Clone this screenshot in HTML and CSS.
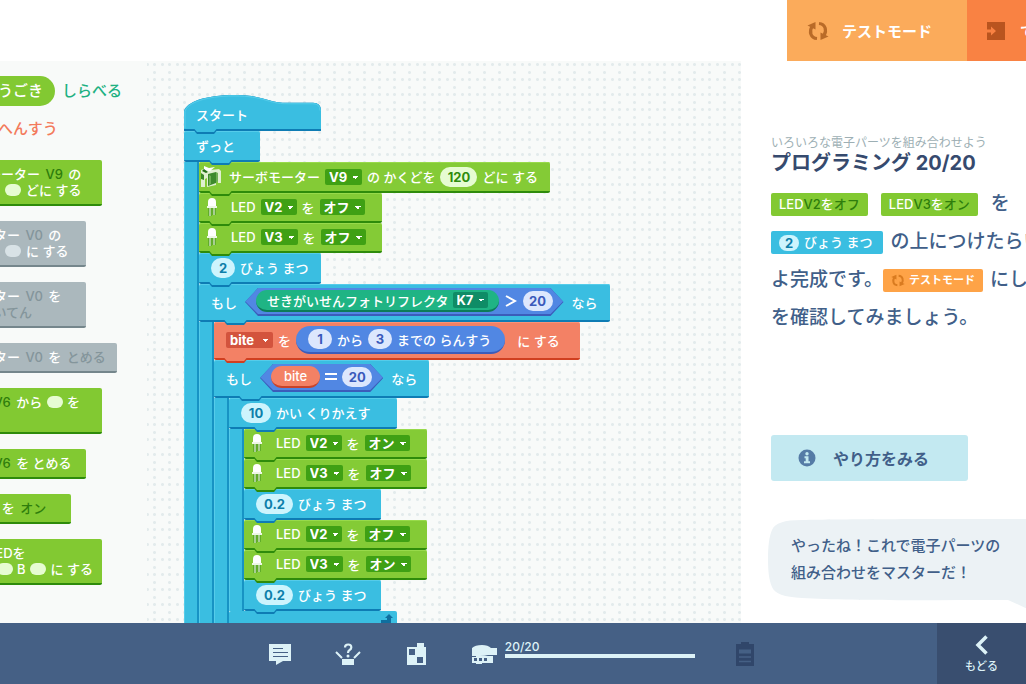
FILE: index.html
```html
<!DOCTYPE html>
<html lang="ja">
<head>
  <meta charset="UTF-8">
  <meta name="viewport" content="width=device-width, initial-scale=1.0">
  <title>プログラミング 20/20</title>
  <link rel="stylesheet" href="styles.css">
</head>
<body>
  <svg class="sprites" aria-hidden="true">
    <symbol id="led" viewBox="0 0 12 20">
      <path d="M4 11v8M8 11v7" stroke="#3f8f1c" stroke-width="3"/>
      <path d="M4 11v8M8 11v7" stroke="#d5e9c4" stroke-width="1.4"/>
      <path d="M2 10V5a4 4 0 0 1 8 0v5z" fill="#fff"/>
      <path d="M1 9h10v2H1z" fill="#eef7e6"/>
    </symbol>
    <symbol id="cycle" viewBox="0 0 22 20">
      <path d="M10 17.500C3.500 17 2 10.500 5 5.500" fill="none" stroke="currentColor" stroke-width="3.200"/>
      <path d="M0.500 4.500L8.500 1V8.500z" fill="currentColor"/>
      <path d="M12 2.500C18.500 3 20 9.500 17 14.500" fill="none" stroke="currentColor" stroke-width="3.200"/>
      <path d="M21.500 15.500L13.500 19V11.500z" fill="currentColor"/>
    </symbol>
  </svg>

  <header class="topbar">
    <div class="modes">
      <button class="mode test"><svg width="22" height="20"><use href="#cycle"/></svg>テストモード</button>
      <button class="mode send"><svg width="18" height="18" viewBox="0 0 18 18"><path d="M0 0h18v18H0z" fill="#b9541f"/><path d="M0 7.500h4V4.500L9 9l-5 4.500v-3H0z" fill="#f98243"/></svg>てんそう</button>
    </div>
  </header>

  <main>
    <aside class="palette">
      <nav class="tabs">
        <a href="#motion" class="tab active">うごき</a>
        <a href="#sense" class="tab sense">しらべる</a>
        <a href="#vars" class="tab vars">へんすう</a>
      </nav>
      <ul class="parts">
        <li class="part w12">サーボモーター <b>V9</b> の<br>かくどを <i></i> どに する</li>
        <li class="part w11 off">DCモーター <b>V0</b> の<br>はやさを <i></i> に する</li>
        <li class="part w11 off">DCモーター <b>V0</b> を<br><b>みぎ かいてん</b></li>
        <li class="part w13 off">DCモーター <b>V0</b> を <b>とめる</b></li>
        <li class="part w12">ブザー <b>V6</b> から <i></i> を<br>ならす</li>
        <li class="part w11">ブザー <b>V6</b> を とめる</li>
        <li class="part w10">LED <b>V2</b> を <b>オン</b></li>
        <li class="part w12">カラーLEDを<br>R <i></i> G <i></i> B <i></i> に する</li>
      </ul>
    </aside>

    <section class="canvas">
      <div class="hat">
        <svg viewBox="0 0 137 37" preserveAspectRatio="none" aria-hidden="true">
          <path d="M0 37V17C2 7 22 0 50 0C82 0 82 8 104 8H129Q137 8 137 16V37z" fill="#0e7cb4"/>
          <path d="M0 35V17C2 7 22 0 50 0C82 0 82 8 104 8H129Q137 8 137 16V35z" fill="#3abee1"/>
          <path d="M1 34V17C3 8 22 1 50 1C82 1 82 9 104 9H129Q136 9 136 16" fill="none" stroke="#55ccea"/>
        </svg>
        <span>スタート</span>
      </div>

      <div class="loop">
        <div class="block head forever">ずっと</div>
        <div class="stack">
          <div class="block green servo">
            <svg class="icon" width="22" height="22" viewBox="0 0 22 22" aria-hidden="true">
              <path d="M1 4l6-2 3 2 9-1 2 2v12h-3V9l-2 1v9l-9 2V12l-2 1v8H1z" fill="#dff0cf"/>
              <path d="M1 7l3 2v5l-3-1zM8 8l8-2v11l-8 3z" fill="#3c8a2b"/>
              <path d="M9 9l2 1v8l-2 1zM16 6l2 1v8l-2 2z" fill="#6caf52"/>
              <path d="M4 0l5 2 6-1-5 4-6-1z" fill="#fff"/>
              <path d="M4 3l4 3-2 1-4-2z" fill="#236e17"/>
            </svg>
            <span>サーボモーター</span>
            <select aria-label="サーボモーターのポート"><option>V9</option></select>
            <span>の かくどを</span>
            <input class="num n3" value="120" aria-label="かくど">
            <span>どに する</span>
          </div>
          <div class="block green led">
            <svg class="icon" width="24" height="20" aria-hidden="true"><use href="#led"/></svg>
            <span>LED</span>
            <select aria-label="LEDのポート"><option>V2</option></select>
            <span>を</span>
            <select aria-label="LEDのじょうたい"><option>オン</option><option selected>オフ</option></select>
          </div>
          <div class="block green led">
            <svg class="icon" width="24" height="20" aria-hidden="true"><use href="#led"/></svg>
            <span>LED</span>
            <select aria-label="LEDのポート"><option>V3</option></select>
            <span>を</span>
            <select aria-label="LEDのじょうたい"><option>オン</option><option selected>オフ</option></select>
          </div>
          <div class="block wait">
            <input class="num n1" value="2" aria-label="びょう">
            <span>びょう まつ</span>
          </div>

          <div class="loop">
            <div class="block head tall if-sensor">
              <span>もし</span>
              <div class="hex">
                <div class="oval sensor">
                  <span>せきがいせんフォトリフレクタ</span>
                  <select aria-label="センサーのポート"><option>K7</option></select>
                </div>
                <svg width="12" height="12" viewBox="0 0 12 12" role="img" aria-label="より おおきい"><path d="M1 1l9 5-9 5" fill="none" stroke="#fff" stroke-width="2"/></svg>
                <input class="num n2" value="20" aria-label="くらべる かず">
              </div>
              <span>なら</span>
            </div>
            <div class="stack">
              <div class="block coral tall assign">
                <select class="name" aria-label="へんすう"><option>bite</option></select>
                <span>を</span>
                <div class="oval random">
                  <input class="num n1" value="1" aria-label="さいしょう">
                  <span>から</span>
                  <input class="num n1" value="3" aria-label="さいだい">
                  <span>までの らんすう</span>
                </div>
                <span>に する</span>
              </div>

              <div class="loop">
                <div class="block head tall if-bite">
                  <span>もし</span>
                  <div class="hex">
                    <div class="oval var">bite</div>
                    <svg width="14" height="8" viewBox="0 0 14 8" role="img" aria-label="おなじ"><path d="M1 1h12M1 6h12" stroke="#fff" stroke-width="2"/></svg>
                    <input class="num n2" value="20" aria-label="くらべる かず">
                  </div>
                  <span>なら</span>
                </div>
                <div class="stack">
                  <div class="loop">
                    <div class="block head repeat">
                      <input class="num n2" value="10" aria-label="かいすう">
                      <span>かい くりかえす</span>
                    </div>
                    <div class="stack">
                      <div class="block green led">
                        <svg class="icon" width="24" height="20" aria-hidden="true"><use href="#led"/></svg>
                        <span>LED</span>
                        <select aria-label="LEDのポート"><option>V2</option></select>
                        <span>を</span>
                        <select aria-label="LEDのじょうたい"><option>オン</option><option>オフ</option></select>
                      </div>
                      <div class="block green led">
                        <svg class="icon" width="24" height="20" aria-hidden="true"><use href="#led"/></svg>
                        <span>LED</span>
                        <select aria-label="LEDのポート"><option>V3</option></select>
                        <span>を</span>
                        <select aria-label="LEDのじょうたい"><option>オン</option><option selected>オフ</option></select>
                      </div>
                      <div class="block wait long">
                        <input class="num n3" value="0.2" aria-label="びょう">
                        <span>びょう まつ</span>
                      </div>
                      <div class="block green led">
                        <svg class="icon" width="24" height="20" aria-hidden="true"><use href="#led"/></svg>
                        <span>LED</span>
                        <select aria-label="LEDのポート"><option>V2</option></select>
                        <span>を</span>
                        <select aria-label="LEDのじょうたい"><option>オン</option><option selected>オフ</option></select>
                      </div>
                      <div class="block green led">
                        <svg class="icon" width="24" height="20" aria-hidden="true"><use href="#led"/></svg>
                        <span>LED</span>
                        <select aria-label="LEDのポート"><option>V3</option></select>
                        <span>を</span>
                        <select aria-label="LEDのじょうたい"><option>オン</option><option>オフ</option></select>
                      </div>
                      <div class="block wait long">
                        <input class="num n3" value="0.2" aria-label="びょう">
                        <span>びょう まつ</span>
                      </div>
                    </div>
                    <div class="foot">
                      <svg width="12" height="9" viewBox="0 0 12 9" aria-hidden="true"><path d="M0 6h6V4H4l4-4 4 4h-2v5H0z" fill="#0f6f9f"/></svg>
                    </div>
                  </div>
                </div>
              </div>
            </div>
          </div>
        </div>
      </div>
    </section>

    <aside class="guide">
      <p class="lesson">いろいろな電子パーツを組み合わせよう</p>
      <h1>プログラミング 20/20</h1>
      <p class="steps">
        <span class="chip led-chip">LED<b>V2</b>を<b>オフ</b></span><span class="chip led-chip">LED<b>V3</b>を<b>オン</b></span>を<br>
        <span class="chip wait-chip"><em>2</em>びょう まつ</span>の上につけたらい<br>
        よ完成です。<span class="chip test-chip"><svg width="14" height="13"><use href="#cycle"/></svg>テストモード</span>にし<br>
        を確認してみましょう。
      </p>
      <button class="howto">
        <svg width="18" height="18" viewBox="0 0 18 18" aria-hidden="true"><circle cx="9" cy="9" r="8.500" fill="#557ba6"/><circle cx="9" cy="4.700" r="1.700" fill="#c3e9f1"/><path d="M6.500 7.300h4v5h1.500v2h-6v-2h1.700v-3H6.500z" fill="#c3e9f1"/></svg>
        やり方をみる
      </button>
      <div class="speech">
        <svg width="320" height="104" viewBox="0 0 320 104" aria-hidden="true"><path d="M0 40C0 28 1 18 4 11C7 4 16 1 34 1C80 0 160 0 320 0V104L282 100L240 81C160 81 80 82 34 79C16 78 7 75 4 68C1 61 0 52 0 40z" fill="#ecf2f5"/></svg>
        <p>やったね！これで電子パーツの<br>組み合わせをマスターだ！</p>
      </div>
    </aside>
  </main>

  <footer>
    <div class="tools">
      <button class="tool" aria-label="メッセージ"><svg width="26" height="26" viewBox="0 0 26 26"><path d="M2 3h22v17h-8l-7 4v-4H2z" fill="#ddf2f7"/><path d="M6 7.500h10M6 11.500h15M6 15.500h15" stroke="#456085" stroke-width="1"/></svg></button>
      <button class="tool" aria-label="ヒント"><svg width="26" height="26" viewBox="0 0 26 26"><path d="M7 18h12v6H7z" fill="#ddf2f7"/><path d="M1 11l6 6M25 11l-6 6" stroke="#ddf2f7" stroke-width="2"/><path d="M10 6.500q0-3 3.200-3T16.300 6.500q0 1.500-1.700 2.500T13 12" fill="none" stroke="#ddf2f7" stroke-width="2.200"/><circle cx="13" cy="15" r="1.500" fill="#ddf2f7"/></svg></button>
      <button class="tool" aria-label="ブロック"><svg width="26" height="26" viewBox="0 0 26 26"><path d="M4 6h10V2h7v4h2v18H4z" fill="#ddf2f7"/><path d="M6 8h6v6H6zM14 16h6v6h-6z" fill="#456085"/></svg></button>
      <button class="tool" aria-label="ロボット"><svg width="26" height="26" viewBox="0 0 26 26"><path d="M1 7Q4 4 11 4q6 0 9 3h6v7h-9q-3 1-8 1H1z" fill="#ddf2f7"/><path d="M1 16h4v-2h3v1h14v7h-11v1H5v-1H1z" fill="#ddf2f7"/><path d="M3 17h3v3H3zM8 17h3v3H8zM13 17h3v3h-3z" fill="#456085"/></svg></button>
    </div>
    <div class="progress">
      <label for="progress">20/20</label>
      <progress id="progress" value="20" max="20"></progress>
    </div>
    <button class="tool" aria-label="ノート"><svg width="26" height="26" viewBox="0 0 26 26"><path d="M4 3h18v22H4zM9 1h8v4H9z" fill="#30466a"/><path d="M7 8.500h12v4H7z" fill="#456085"/><path d="M7 16h12M7 20.500h12" stroke="#456085" stroke-width="1.400"/></svg></button>
    <button class="back">
      <svg width="14" height="20" viewBox="0 0 14 20" aria-hidden="true"><path d="M11.500 1.500L3 10l8.500 8.500" fill="none" stroke="#ddf2f7" stroke-width="3.500"/></svg>
      もどる
    </button>
  </footer>
</body>
</html>
```

FILE: styles.css
```css
* {
  box-sizing: border-box;
  margin: 0;
  padding: 0;
}
body {
  display: flex;
  flex-direction: column;
  height: 100vh;
  overflow: hidden;
  background: #fff;
  color: #fff;
  font-family: Inter, "Noto Sans CJK JP", sans-serif;
  font-size: 13px;
  font-weight: 500;
}
button, input, select {
  font: inherit;
  color: inherit;
  border: none;
}
button {
  cursor: pointer;
}
.sprites {
  position: absolute;
  width: 0;
  height: 0;
}

/* top bar */
.topbar {
  flex: none;
  display: flex;
  justify-content: flex-end;
  height: 61px;
}
.modes {
  display: flex;
  width: 239px;
  overflow: hidden;
}
.mode {
  flex: 0 0 180px;
  display: flex;
  align-items: center;
  gap: 13px;
  padding-left: 20px;
  font-size: 15px;
  font-weight: 700;
}
.test {
  background: #fbab5b;
}
.test svg {
  color: #b96b28;
}
.send {
  background: #f98243;
  gap: 15px;
}

main {
  flex: 1;
  display: flex;
  min-height: 0;
}

/* palette */
.palette {
  flex: 0 0 147px;
  background: #f8faf9;
  padding-top: 15px;
  overflow: hidden;
}
.tabs {
  display: flex;
  flex-wrap: wrap;
  margin-left: -20px;
  row-gap: 8px;
}
.tab {
  padding: 0 7px;
  line-height: 30px;
  font-size: 15px;
  text-decoration: none;
}
.tab.active {
  background: #82c932;
  border-radius: 15px;
  width: 75px;
  padding: 0 12px 0 18px;
  color: #fff;
}
.tab.sense {
  color: #1eb182;
}
.tab.vars {
  color: #f37a5c;
  padding-left: 18px;
}
.parts {
  list-style: none;
  display: flex;
  flex-direction: column;
  align-items: flex-start;
  gap: 15px;
  margin: 16px 0 0 -81px;
}
.part {
  padding: 6px 0 6px 30px;
  background: #82c932;
  border-bottom: 2px solid #2e8b0b;
  border-radius: 2px;
  line-height: 16px;
  white-space: nowrap;
}
.part b {
  margin: 0 2px;
  color: #2e7d0c;
  font-weight: 500;
}
.part i {
  display: inline-block;
  width: 16px;
  height: 12px;
  margin: 0 1px;
  border-radius: 6px;
  background: #e6fcd2;
  vertical-align: -1px;
}
.part.off {
  background: #abb8bd;
  border-bottom-color: #75868c;
}
.part.off b {
  color: #84959b;
}
.part.off i {
  background: #d8e2e6;
}
.w10 { width: 152px; }
.w11 { width: 167px; }
.w12 { width: 183px; }
.w13 { width: 198px; }

/* block canvas */
.canvas {
  flex: 1;
  min-width: 0;
  overflow: hidden;
  padding: 34px 0 0 37px;
  background-color: #f8faf9;
  background-image:
    radial-gradient(circle, #e3ebec 1px, transparent 2px),
    radial-gradient(circle, #e3ebec 1px, transparent 2px),
    radial-gradient(circle, #e3ebec 1px, transparent 2px);
  background-size: 15px 15px;
  background-position: -7px -4px, 0 -4px, 0 4px;
}
.block, .hat, .loop, .foot {
  --fill: #3abee1;
  --light: #55ccea;
  --dark: #0e7cb4;
  --field: #cdf4fd;
  --ink: #0e7faa;
}
.block.green {
  --fill: #84cb36;
  --light: #98da4b;
  --dark: #2e8b0b;
  --field: #e6fcd2;
  --ink: #2f8c0d;
  --drop: #3fa014;
}
.block.coral {
  --fill: #f38165;
  --light: #fb9279;
  --dark: #d03f20;
  --drop: #d3533d;
}
.hat {
  position: relative;
  width: 137px;
  height: 36px;
  padding: 10px 0 0 12px;
  line-height: 20px;
}
.hat svg {
  position: absolute;
  inset: 0;
  width: 100%;
  height: 100%;
}
.hat span {
  position: relative;
}
.block {
  position: relative;
  display: flex;
  align-items: center;
  gap: 5px;
  width: max-content;
  height: 31px;
  padding: 0 12px;
  background: var(--fill);
  border-bottom: 2px solid var(--dark);
  border-radius: 2px;
  box-shadow: inset 0 1px var(--light);
  white-space: nowrap;
}
/* connector tab that hangs over the next block */
.block::before, .block::after, .hat::before, .hat::after {
  content: "";
  position: absolute;
  z-index: 1;
  left: 10px;
  width: 23px;
  height: 5px;
  bottom: -5px;
  background: var(--dark);
  clip-path: polygon(0 0, 100% 0, 100% 30%, 87% 100%, 13% 100%, 0 30%);
}
.block::after, .hat::after {
  bottom: -3px;
  background: var(--fill);
}
.hat::before {
  bottom: -3px;
}
.hat::after {
  bottom: -1px;
}
.block.head::before, .block.head::after {
  left: 25px;
}
.stack {
  padding-left: 15px;
  background: linear-gradient(to right, #55ccea 1px, #3abee1 1px 13px, #1793c4 13px 15px, transparent 15px) no-repeat;
}
.forever { min-width: 76px; }
.servo { min-width: 350px; }
.wait { min-width: 122px; }
.wait.long { min-width: 137px; }
.if-sensor { min-width: 411px; }
.assign { min-width: 366px; }
.if-bite { min-width: 213px; }
.repeat { min-width: 168px; }
.tall {
  height: 38px;
  gap: 8px;
}
.led {
  height: 30px;
  min-width: 183px;
}
.block.green {
  padding-left: 1px;
}
.icon {
  margin-right: 2px;
}
.foot {
  display: flex;
  justify-content: flex-end;
  width: 168px;
  height: 15px;
  padding: 3px 4px 0 0;
  background: var(--fill);
  border-bottom: 2px solid var(--dark);
  border-radius: 2px;
}

select {
  appearance: none;
  height: 16px;
  padding: 0 14px 0 4px;
  border-radius: 2px;
  line-height: 16px;
  font-weight: 700;
  background-color: var(--drop);
  background-image:
    linear-gradient(to top right, transparent 50%, #fff 50%),
    linear-gradient(to top left, transparent 50%, #fff 50%);
  background-size: 3px 3px;
  background-position: right 7px top 7px, right 4px top 7px;
  background-repeat: no-repeat;
}
.name {
  padding-right: 18px;
}
.num {
  height: 20px;
  border-radius: 10px;
  background: var(--field);
  color: var(--ink);
  text-align: center;
  font-weight: 700;
}
.n1 { width: 24px; }
.n2 { width: 30px; }
.n3 { width: 37px; }

.hex {
  position: relative;
  display: flex;
  align-items: center;
  gap: 6px;
  height: 28px;
  padding: 0 11px 2px;
  background: #3b5cba;
  clip-path: polygon(0 50%, 13px 0, calc(100% - 13px) 0, 100% 50%, calc(100% - 13px) 100%, 13px 100%);
  --field: #dce7fd;
  --ink: #3a5abb;
}
.hex::before {
  content: "";
  position: absolute;
  inset: 0 0 2px;
  background: #5187e3;
  clip-path: polygon(0 50%, 13px 0, calc(100% - 13px) 0, 100% 50%, calc(100% - 13px) 100%, 13px 100%);
}
.hex > * {
  position: relative;
}
.if-bite .hex {
  gap: 4px;
}
.oval {
  display: flex;
  align-items: center;
  border-radius: 15px;
}
.sensor {
  height: 22px;
  gap: 4px;
  padding: 0 11px;
  background: #1fb484;
  border-bottom: 2px solid #0c7c58;
  --drop: #0f8c66;
}
.var {
  height: 22px;
  padding: 0 13px;
  background: #f38165;
  border-bottom: 2px solid #c9432a;
}
.random {
  height: 28px;
  gap: 5px;
  padding: 0 14px 0 12px;
  background: #5187e3;
  border-bottom: 2px solid #3b5cba;
  --field: #dce7fd;
  --ink: #3a5abb;
}
.assign {
  gap: 5px;
}
.assign > span:last-child {
  margin-left: 7px;
}

/* guide */
.guide {
  flex: 0 0 285px;
  padding: 74px 0 0 30px;
  overflow: hidden;
  color: #415f89;
  white-space: nowrap;
}
.lesson {
  font-size: 12px;
  line-height: 16px;
  font-weight: 400;
  color: #9dafb4;
}
h1 {
  font-size: 20px;
  line-height: 24px;
  color: #364a6e;
}
.steps {
  margin-top: 10px;
  font-size: 19px;
  line-height: 38px;
}
.chip {
  display: inline-flex;
  align-items: center;
  height: 23px;
  margin-right: 13px;
  padding: 0 8px;
  border-radius: 2px;
  color: #fff;
  font-size: 13px;
  line-height: 23px;
  vertical-align: middle;
}
.led-chip {
  background: #82c932;
}
.led-chip b {
  color: #2e7d0c;
  font-weight: 500;
}
.wait-chip {
  background: #3abee1;
  margin-right: 7px;
  padding-right: 11px;
}
.wait-chip em {
  width: 20px;
  margin-right: 5px;
  border-radius: 8px;
  background: #cdf4fd;
  color: #0e7faa;
  font-style: normal;
  font-weight: 700;
  line-height: 16px;
  text-align: center;
}
.test-chip {
  gap: 4px;
  margin-right: 7px;
  background: #fea347;
  font-size: 11px;
  font-weight: 700;
}
.test-chip svg {
  color: #d97b20;
}
.howto {
  display: flex;
  align-items: center;
  gap: 17px;
  width: 197px;
  height: 46px;
  margin-top: 98px;
  padding-left: 27px;
  border-radius: 3px;
  background: #c3e9f1;
  font-size: 16px;
  font-weight: 600;
  color: #415f89;
}
.speech {
  position: relative;
  margin: 38px 0 0 -3px;
  padding: 13px 23px;
  font-size: 15px;
  line-height: 27px;
}
.speech svg {
  position: absolute;
  left: 0;
  top: 0;
}
.speech p {
  position: relative;
}

/* bottom bar */
footer {
  flex: none;
  display: flex;
  align-items: center;
  height: 61px;
  padding-left: 26%;
  background: #456085;
  color: #ddf2f7;
}
.tools {
  display: flex;
  gap: 42px;
}
.tool {
  width: 26px;
  height: 26px;
  background: none;
}
.tool svg {
  display: block;
}
.progress {
  display: flex;
  flex-direction: column;
  width: 190px;
  margin: 0 37px 11px 8px;
  font-size: 12px;
  line-height: 15px;
}
progress {
  appearance: none;
  width: 100%;
  height: 4px;
  border: none;
  background: #30466a;
}
progress::-webkit-progress-bar {
  background: #30466a;
}
progress::-webkit-progress-value {
  background: #ddf2f7;
}
.back {
  display: flex;
  flex-direction: column;
  align-items: center;
  justify-content: center;
  align-self: stretch;
  gap: 2px;
  width: 89px;
  margin-left: auto;
  background: #394e6f;
  font-size: 11px;
}
```
